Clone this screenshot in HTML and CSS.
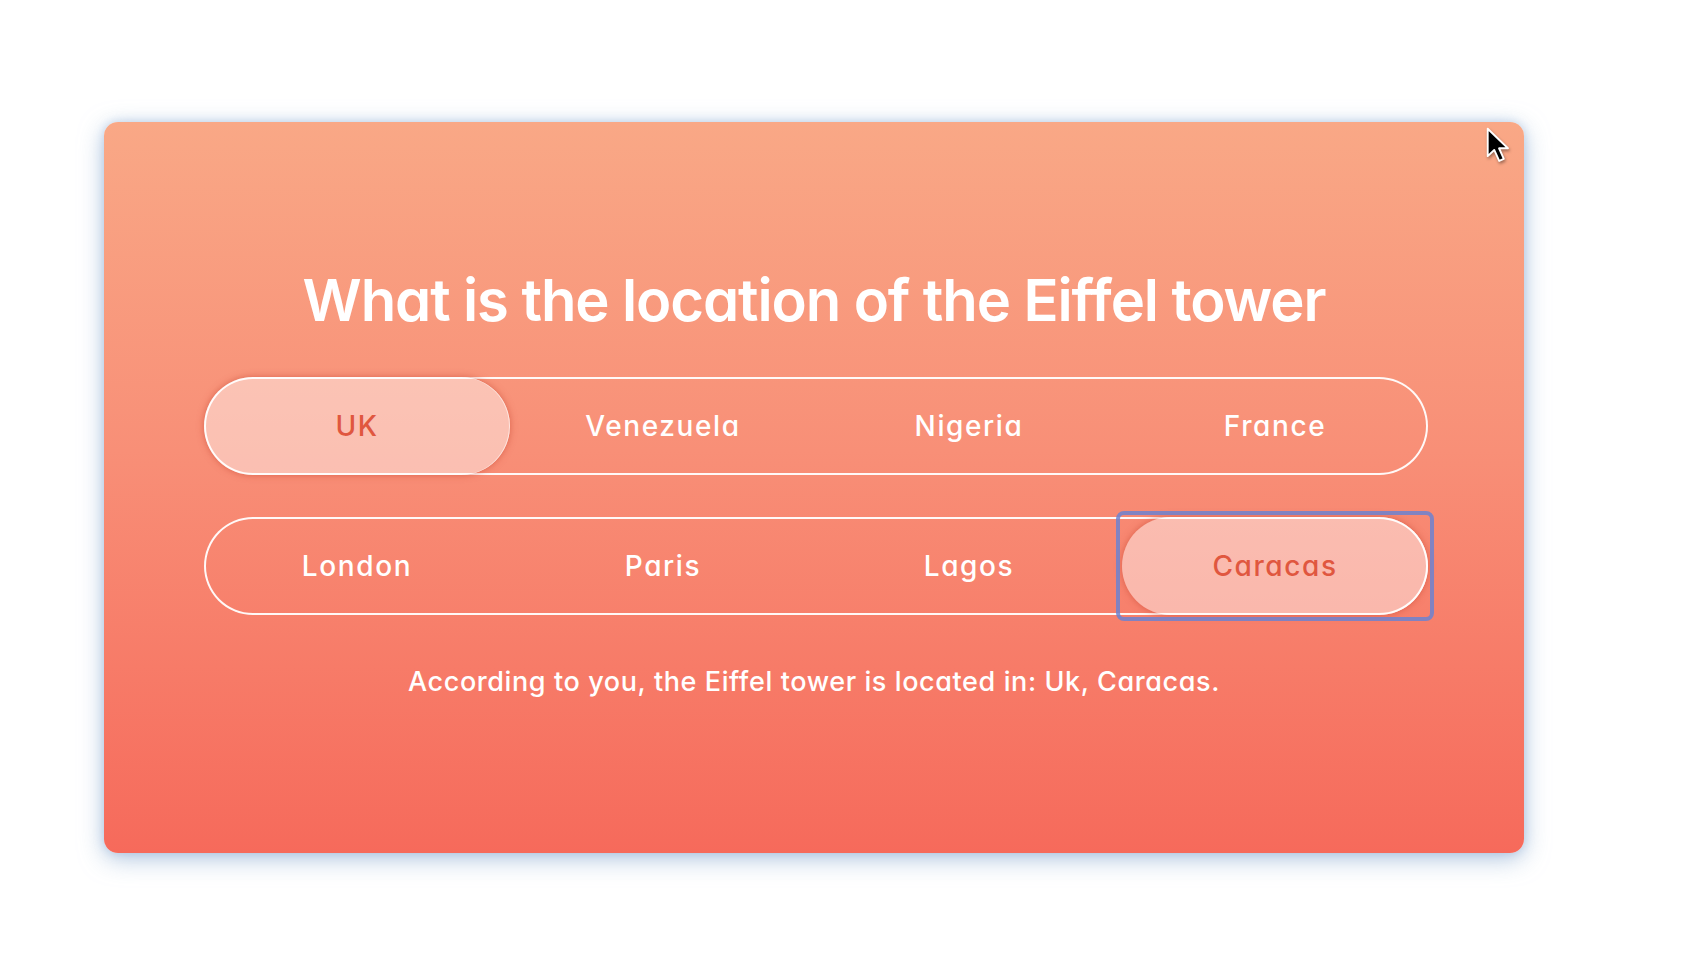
FILE: index.html
```html
<!DOCTYPE html>
<html lang="en">
<head>
<meta charset="utf-8">
<title>Eiffel tower quiz</title>
<link rel="stylesheet" href="styles.css">
</head>
<body>
<div class="page">
  <main class="card">
    <h1 class="title">What is the location of the Eiffel tower</h1>
    <div class="options">
      <div class="row">
        <button class="opt selected"><span class="pill">UK</span></button>
        <button class="opt"><span class="pill">Venezuela</span></button>
        <button class="opt"><span class="pill">Nigeria</span></button>
        <button class="opt"><span class="pill">France</span></button>
      </div>
      <div class="row">
        <button class="opt"><span class="pill">London</span></button>
        <button class="opt"><span class="pill">Paris</span></button>
        <button class="opt"><span class="pill">Lagos</span></button>
        <button class="opt selected focused"><span class="pill">Caracas</span></button>
      </div>
    </div>
    <p class="answer">According to you, the Eiffel tower is located in: Uk, Caracas.</p>
  </main>
  <svg class="cursor" width="24" height="36" viewBox="0 0 14 21" aria-hidden="true">
    <path d="M1 1 L1 17 L4.8 13.4 L7.7 19.8 L10.4 18.6 L7.6 12.4 L12.8 12.4 Z" fill="#000" stroke="#fff" stroke-width="1.1" stroke-linejoin="round"/>
  </svg>
</div>
</body>
</html>
```

FILE: styles.css
```css
html, body {
  margin: 0;
  padding: 0;
  background: #ffffff;
}

.page {
  position: relative;
  width: 1694px;
  height: 980px;
  padding: 122px 0 0 104px;
  box-sizing: border-box;
  font-family: "Inter", "Lato", sans-serif;
  font-feature-settings: "cv11" 1;
}

.card {
  width: 1420px;
  height: 731px;
  box-sizing: border-box;
  padding-top: 142px;
  border-radius: 14px;
  background: linear-gradient(180deg, #f9a886 0%, #f88f77 45%, #f66a5b 100%);
  box-shadow: 0 6px 24px rgba(140, 172, 210, 0.65), 0 0 10px rgba(160, 188, 222, 0.55);
  display: flex;
  flex-direction: column;
  align-items: center;
}

.title {
  margin: 0;
  font-size: 58px;
  line-height: 72px;
  font-weight: 600;
  color: #ffffff;
  letter-spacing: -1.1px;
  text-align: center;
}

.options {
  margin-top: 41px;
  margin-left: 4px;
  width: 1224px;
  display: flex;
  flex-direction: column;
  gap: 42px;
}

.row {
  display: grid;
  grid-template-columns: repeat(4, 1fr);
  height: 98px;
  border-radius: 49px;
  box-shadow: inset 0 0 0 2px rgba(255, 255, 255, 0.95);
}

.opt {
  display: flex;
  margin: 0;
  padding: 0;
  border: none;
  background: transparent;
  font-family: inherit;
  font-feature-settings: "cv11" 1;
  font-size: 28px;
  font-weight: 500;
  letter-spacing: 1.6px;
  color: #ffffff;
  cursor: pointer;
}

.pill {
  flex: 1;
  display: flex;
  align-items: center;
  justify-content: center;
  border-radius: 49px;
}

.opt.selected .pill {
  background: rgba(255, 255, 255, 0.44);
  color: #e0573f;
  box-shadow: 0 0 7px rgba(200, 70, 50, 0.6), inset -1px 0 0 rgba(255, 255, 255, 0.6);
}

.opt.focused {
  outline: 4px solid rgba(108, 130, 208, 0.85);
  outline-offset: 2px;
  border-radius: 2px;
}

.answer {
  margin: 52px 0 0;
  font-size: 27px;
  line-height: 30px;
  font-weight: 500;
  letter-spacing: 0.6px;
  color: #ffffff;
  text-align: center;
}

.cursor {
  position: absolute;
  left: 1486px;
  top: 127px;
  filter: drop-shadow(1px 2px 1.5px rgba(0, 0, 0, 0.35));
}
```
